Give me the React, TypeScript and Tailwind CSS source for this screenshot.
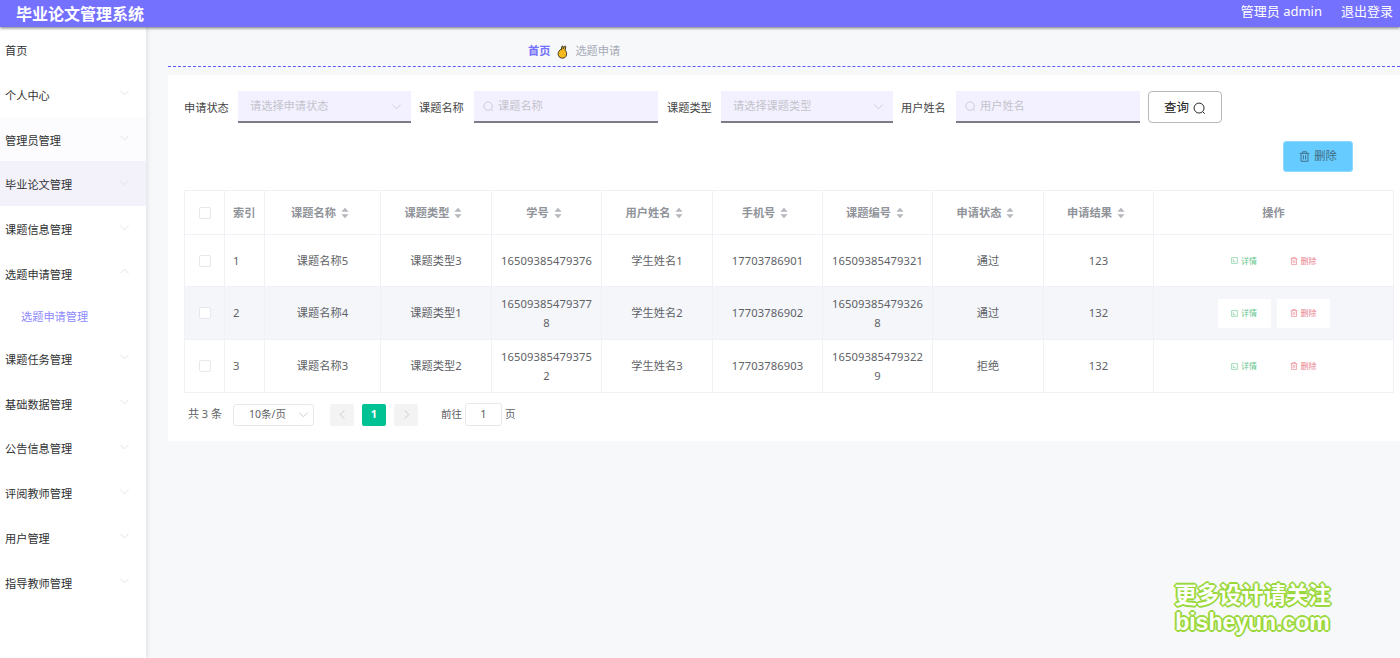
import React from "react";

const font = "[font-family:'Noto_Sans','Noto_Sans_CJK_SC',sans-serif]";

function Chevron({ up = false, className = "" }: { up?: boolean; className?: string }) {
  return (
    <svg viewBox="0 0 12 12" className={`w-[11px] h-[11px] ${className}`} fill="none" stroke="currentColor" strokeWidth="0.9">
      <path d={up ? "M1.5 8 L6 3.5 L10.5 8" : "M1.5 4 L6 8.5 L10.5 4"} />
    </svg>
  );
}

function SearchIcon({ className = "" }: { className?: string }) {
  return (
    <svg viewBox="0 0 12 12" className={className} fill="none" stroke="currentColor" strokeWidth="0.9">
      <circle cx="5.6" cy="5.6" r="4.6" />
      <path d="M9 9 L10.8 10.8" />
    </svg>
  );
}

function TrashIcon({ className = "" }: { className?: string }) {
  return (
    <svg viewBox="0 0 12 12" className={className} fill="none" stroke="currentColor" strokeWidth="1">
      <path d="M0.8 2.6 H11.2 M4 2.6 V0.8 H8 V2.6 M2.2 2.6 V11.2 H9.8 V2.6 M4.8 4.6 V9.2 M7.2 4.6 V9.2" />
    </svg>
  );
}

function DocIcon({ className = "" }: { className?: string }) {
  return (
    <svg viewBox="0 0 12 12" className={className} fill="none" stroke="currentColor" strokeWidth="1">
      <path d="M1 1 H11 V11 H1 Z M4 3.8 V8 H8" />
    </svg>
  );
}

function Sort() {
  return (
    <svg viewBox="0 0 8 12" className="w-[8px] h-[12px] ml-[5px] shrink-0 text-[#b4b7bd]" fill="currentColor">
      <path d="M4 0.8 L7.6 4.8 H0.4 Z M4 11.2 L7.6 7.2 H0.4 Z" />
    </svg>
  );
}

function Hand() {
  return (
    <svg viewBox="0 0 12 15" className="w-[11px] h-[14px] mx-[7px]">
      <path
        d="M1.6 11.5 C1 9.8 1.2 8 2 6.8 L3.4 5.2 C3.8 4.6 4.5 4.8 4.6 5.4 L5.2 1.6 C5.4 0.6 6.7 0.7 6.7 1.7 L6.8 4 L8.2 1.4 C8.7 0.6 9.8 1 9.6 2 L8.9 5.6 C10.4 6.8 10.8 9 10.3 10.8 C9.8 13 8.4 14.2 6.2 14.2 C4 14.2 2.4 13.4 1.6 11.5 Z"
        fill="#f5b81f"
        stroke="#1c1c1c"
        strokeWidth="0.9"
        strokeLinejoin="round"
      />
    </svg>
  );
}

const menus: { label: string; arrow?: boolean; open?: boolean; active?: boolean; tint?: boolean }[] = [
  { label: "首页" },
  { label: "个人中心", arrow: true },
  { label: "管理员管理", arrow: true, tint: true },
  { label: "毕业论文管理", arrow: true, active: true },
  { label: "课题信息管理", arrow: true },
  { label: "选题申请管理", arrow: true, open: true },
  { label: "课题任务管理", arrow: true },
  { label: "基础数据管理", arrow: true },
  { label: "公告信息管理", arrow: true },
  { label: "评阅教师管理", arrow: true },
  { label: "用户管理", arrow: true },
  { label: "指导教师管理", arrow: true },
];

function Sidebar() {
  return (
    <aside className="w-[146px] shrink-0 bg-white shadow-[2px_0_4px_rgba(0,0,0,0.08)] z-10 text-[11.2px] text-[#303133]">
      {menus.map((m) => (
        <div key={m.label}>
          <div
            className={`h-[44.8px] flex items-center justify-between pl-[5px] pr-[16px] ${
              m.active ? "bg-[#f3f2fb]" : m.tint ? "bg-[#fcfcfe]" : ""
            }`}
          >
            <span className="pt-[4px]">{m.label}</span>
            {m.arrow && <Chevron up={m.open} className="text-[#dcdde6] -mt-[3px]" />}
          </div>
          {m.open && (
            <div className="h-[40px] flex items-center pl-[21px] pt-[3px] text-[#8e8aff]">选题申请管理</div>
          )}
        </div>
      ))}
    </aside>
  );
}

function SelectBox({ placeholder, width }: { placeholder: string; width: string }) {
  return (
    <div className={`${width} h-[32px] bg-[#f3f1ff] border-b-2 border-[#7d7b85] flex items-center justify-between pl-[12px] pr-[9px] text-[#c3c4cc]`}>
      <span>{placeholder}</span>
      <Chevron className="text-[#c3c4cc]" />
    </div>
  );
}

function InputBox({ placeholder }: { placeholder: string }) {
  return (
    <div className="w-[184px] h-[32px] bg-[#f3f1ff] border-b-2 border-[#7d7b85] flex items-center pl-[9px] text-[#c3c4cc]">
      <SearchIcon className="w-[11px] h-[11px] mr-[4px]" />
      <span>{placeholder}</span>
    </div>
  );
}

function Filters() {
  const label = "pt-[3px]";
  return (
    <div className="flex items-center text-[11.2px] text-[#444]">
      <span className={`${label} w-[54px]`}>申请状态</span>
      <SelectBox placeholder="请选择申请状态" width="w-[173px]" />
      <span className={`${label} ml-[8px] w-[55px]`}>课题名称</span>
      <InputBox placeholder="课题名称" />
      <span className={`${label} ml-[9px] w-[54px]`}>课题类型</span>
      <SelectBox placeholder="请选择课题类型" width="w-[172px]" />
      <span className={`${label} ml-[8px] w-[55px]`}>用户姓名</span>
      <InputBox placeholder="用户姓名" />
      <button className="ml-[8px] w-[74px] h-[32px] border border-[#b8b8b8] rounded-[4px] bg-white flex items-center justify-center pt-[2px] text-[12.5px] text-[#222]">
        查询
        <SearchIcon className="w-[13px] h-[13px] ml-[4px]" />
      </button>
    </div>
  );
}

const columns = [
  { t: "索引", w: "w-[40px]", left: true },
  { t: "课题名称", w: "w-[116px]", s: true },
  { t: "课题类型", w: "w-[111px]", s: true },
  { t: "学号", w: "w-[110px]", s: true },
  { t: "用户姓名", w: "w-[111px]", s: true },
  { t: "手机号", w: "w-[110px]", s: true },
  { t: "课题编号", w: "w-[110px]", s: true },
  { t: "申请状态", w: "w-[111px]", s: true },
  { t: "申请结果", w: "w-[110px]", s: true },
];

const rows = [
  ["1", "课题名称5", "课题类型3", "16509385479376", "学生姓名1", "17703786901", "16509385479321", "通过", "123"],
  ["2", "课题名称4", "课题类型1", "165093854793778", "学生姓名2", "17703786902", "165093854793268", "通过", "132"],
  ["3", "课题名称3", "课题类型2", "165093854793752", "学生姓名3", "17703786903", "165093854793229", "拒绝", "132"],
];

const rowH = ["h-[52px]", "h-[53px]", "h-[53px]"];

function Check({ light }: { light?: boolean }) {
  return <span className={`block w-[12px] h-[12px] mx-auto rounded-[2px] border border-[#e6e8ee] ${light ? "bg-white" : ""}`} />;
}

function DataTable() {
  const cell = "border-r border-b border-[#eff1f6]";
  return (
    <table className="table-fixed border-collapse w-[1210px] border-t border-l border-[#eff1f6] text-[11.2px] text-[#606266]">
      <thead>
        <tr className="h-[44px] text-[#909399] font-bold">
          <th className={`${cell} w-[40px]`}><Check /></th>
          {columns.map((c) => (
            <th key={c.t} className={`${cell} ${c.w} font-bold pt-[1px] ${c.left ? "text-left pl-[8px]" : ""}`}>
              {c.s ? (
                <span className="inline-flex items-center justify-center -mt-[3px] pr-[5px]">{c.t}<Sort /></span>
              ) : (
                c.t
              )}
            </th>
          ))}
          <th className={`${cell} font-bold pt-[1px]`}>操作</th>
        </tr>
      </thead>
      <tbody>
        {rows.map((r, i) => (
          <tr key={r[0]} className={`${rowH[i]} ${i === 1 ? "bg-[#f4f6fa]" : ""}`}>
            <td className={cell}><Check light={i === 1} /></td>
            {r.map((v, j) => (
              <td key={j} className={`${cell} px-[8px] pt-[1px] leading-[18.5px] tracking-[0.1px] break-all ${j === 0 ? "text-left" : "text-center"}`}>
                {v}
              </td>
            ))}
            <td className={cell}>
              <div className="flex justify-center gap-[6px] text-[8px]">
                <span className={`w-[53px] h-[29px] flex items-center justify-center gap-[3px] text-[#67c58d] ${i === 1 ? "bg-white" : ""}`}>
                  <DocIcon className="w-[7px] h-[7px]" />详情
                </span>
                <span className={`w-[53px] h-[29px] flex items-center justify-center gap-[3px] text-[#e8828c] ${i === 1 ? "bg-white" : ""}`}>
                  <TrashIcon className="w-[8px] h-[8px]" />删除
                </span>
              </div>
            </td>
          </tr>
        ))}
      </tbody>
    </table>
  );
}

function Pagination() {
  return (
    <div className="flex items-center mt-[10px] pl-[4px] text-[11px] text-[#606266]">
      <span className="w-[45px]">共 3 条</span>
      <div className="w-[81px] h-[22px] border border-[#e6e8ee] rounded-[3px] flex items-center justify-between pl-[15px] pr-[4px]">
        <span className="text-[10.5px]">10条/页</span>
        <Chevron className="text-[#c0c4cc]" />
      </div>
      <span className="ml-[16px] w-[24px] h-[22px] bg-[#f3f3f3] rounded-[2px] flex items-center justify-center text-[#c0c4cc]">
        <Chevron className="rotate-90" />
      </span>
      <span className="ml-[8px] w-[24px] h-[22px] bg-[#00c292] rounded-[2px] flex items-center justify-center text-white font-bold text-[11px]">1</span>
      <span className="ml-[8px] w-[24px] h-[22px] bg-[#f3f3f3] rounded-[2px] flex items-center justify-center text-[#c0c4cc]">
        <Chevron className="-rotate-90" />
      </span>
      <span className="ml-[23px] text-[10.5px]">前往</span>
      <span className="ml-[3px] w-[37px] h-[23px] border border-[#e6e8ee] rounded-[3px] flex items-center justify-center">1</span>
      <span className="ml-[3px] text-[10.5px]">页</span>
    </div>
  );
}

export default function App() {
  return (
    <div className={`${font} relative w-[1400px] h-[658px] overflow-hidden bg-[#f6f8fa] flex flex-col`}>
      <header className="h-[27px] shrink-0 bg-[#7571ff] shadow-[0_1px_3px_rgba(0,0,0,0.55)] z-20 flex items-center justify-between pl-[16px] pr-[7px] text-white">
        <span className="text-[16px] font-bold">毕业论文管理系统</span>
        <div className="flex items-center gap-[19px] text-[13px] -mt-[4px]">
          <span>管理员 admin</span>
          <span>退出登录</span>
        </div>
      </header>
      <div className="flex flex-1 min-h-0">
        <Sidebar />
        <main className="flex-1 min-w-0 pl-[22px]">
          <nav className="h-[40px] border-b border-dashed border-[#5f5aff] flex items-center pl-[360px] pt-[10px] text-[11.2px]">
            <span className="font-bold text-[#7571ff]">首页</span>
            <Hand />
            <span className="text-[#a8abb8]">选题申请</span>
          </nav>
          <section className="mt-[8px] bg-white h-[366px] pt-[16px] pl-[16px] pr-[6px]">
            <Filters />
            <div className="flex justify-end mt-[18px] pr-[41px]">
              <button className="w-[70px] h-[31px] bg-[#66ccff] border border-[#8fd9ff] rounded-[3px] flex items-center justify-center gap-[4px] text-[11.2px] text-[#3f6a82]">
                <TrashIcon className="w-[11px] h-[11px]" />
                删除
              </button>
            </div>
            <div className="mt-[18px]">
              <DataTable />
            </div>
            <Pagination />
          </section>
        </main>
      </div>
      <div className="absolute left-[1174px] top-[581px] w-[157px] flex flex-col items-center font-bold text-white leading-none [text-shadow:-1px_-1px_0_#9bd83c,1px_-1px_0_#9bd83c,-1px_1px_0_#9bd83c,1px_1px_0_#9bd83c,0_2px_0_#9bd83c,2px_0_0_#9bd83c,-2px_0_0_#9bd83c,0_-2px_0_#9bd83c]">
        <span className="text-[22.3px] leading-[28px] whitespace-nowrap">更多设计请关注</span>
        <span className="text-[23px] leading-[26px] whitespace-nowrap [font-family:'Liberation_Sans',sans-serif]">bisheyun.com</span>
      </div>
    </div>
  );
}
